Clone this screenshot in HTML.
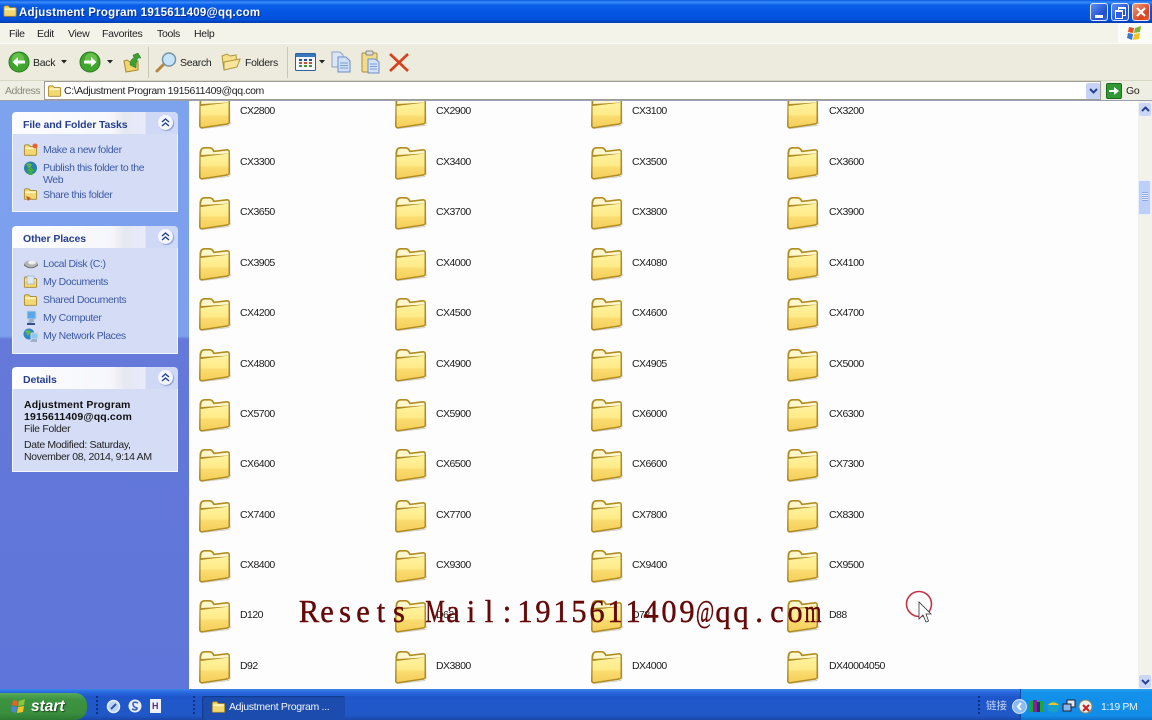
<!DOCTYPE html>
<html><head><meta charset="utf-8"><style>
html,body{margin:0;padding:0}
body{width:1152px;height:720px;overflow:hidden;position:relative;background:#fff;font-family:"Liberation Sans","Noto Sans CJK SC",sans-serif;font-size:10.5px;color:#222}
.a{position:absolute;white-space:nowrap}
.t{font-size:10.5px;letter-spacing:-.3px;line-height:13px}
.f{position:absolute;width:34px;height:34px}
.l{position:absolute;font-size:10.5px;letter-spacing:-.55px;line-height:12px;color:#1c1c1c;white-space:nowrap}
.lk{position:absolute;left:43px;color:#3d5aa6;font-size:10.5px;letter-spacing:-.42px;line-height:12px;white-space:nowrap}
.hd{position:absolute;left:12px;width:166px;height:22px;border-radius:4px 4px 0 0;background:linear-gradient(90deg,#fdfdfe 0,#f6f7fc 60%,#e6e8f0 68%,#e6e9f8 75%,#e8ebfa 80%,#cfd9f6 81%,#cfd9f6 100%)}
.ti{position:absolute;left:23px;color:#26408f;font-weight:bold;font-size:10.5px;letter-spacing:-.1px;line-height:13px;white-space:nowrap}
.bd{position:absolute;left:12px;width:164px;background:#d5ddf6;border:1px solid #f4f6fd;border-top:0}
.chev{position:absolute;left:158px;width:15px;height:15px;border-radius:50%;background:#f4f6fd;box-shadow:1px 1px 1px #8b9ad8}
</style></head><body>
<svg width="0" height="0" style="position:absolute"><defs>
<linearGradient id="g1" x1="0" y1="0" x2="0" y2="1"><stop offset="0" stop-color="#fff3a0"/><stop offset=".5" stop-color="#ffea88"/><stop offset=".56" stop-color="#fbdc70"/><stop offset="1" stop-color="#f4cf5a"/></linearGradient>
<symbol id="fo" viewBox="0 0 34 34">
<path d="M3 33.5 L32 30 L33.5 27 L33.5 8 L34 28 L32 31 L5 34 Z" fill="#cfcfc8"/>
<path d="M2.5 6 Q3 1.5 7 1 L13 1 Q15.5 1 17.5 4.5 L30 3 Q33 3 33 6 L33 27 Q33 29 30.5 29.7 L5 33.5 Q2 33.5 2 30.5 Z" fill="#b08c22"/>
<path d="M4.2 9 L4.4 6 Q4.6 3 7.5 2.6 L13 2.6 Q14.5 2.6 16.5 6.2 L30 4.6 Q31.4 4.6 31.5 6 L31.5 7.5 Z" fill="#fff8cc"/>
<path d="M3.6 11 L31.5 7.6 L31.5 27 Q31.5 28 30 28.2 L5.2 32 Q3.6 32 3.6 30.5 Z" fill="url(#g1)"/>
</symbol>
<symbol id="sf" viewBox="0 0 16 16"><path d="M1 4 Q1 2 3 2 L6 2 L8 4 L14 4 Q15 4 15 5 L15 13 Q15 14 14 14 L2 14 Q1 14 1 13 Z" fill="#f3d772" stroke="#a5872c"/><path d="M2 5 L14 5 L14 7 L2 7 Z" fill="#fff5c0"/></symbol>
</defs></svg>

<!-- title bar -->
<div class="a" style="left:0;top:0;width:1152px;height:23px;background:linear-gradient(180deg,#0a5be0 0,#3a8cfb 10%,#0a5fe8 22%,#0254e2 60%,#0350da 85%,#003db0 100%)"></div>
<svg class="a" style="left:2px;top:4px" width="16" height="14"><use href="#sf" width="16" height="14"/></svg>
<div class="a" style="left:19px;top:6px;color:#fff;font-weight:bold;font-size:11.5px;line-height:14px;letter-spacing:.25px;text-shadow:1px 1px 0 #0a2f90">Adjustment Program 1915611409@qq.com</div>
<div class="a" style="left:1090px;top:3px;width:18px;height:18px;border:1px solid #dfe8ff;box-sizing:border-box;border-radius:3px;background:linear-gradient(135deg,#5e8ff0,#1f4fd0 70%,#3a6ae0)"><div class="a" style="left:4px;top:11px;width:8px;height:3px;background:#fff"></div></div>
<div class="a" style="left:1111px;top:3px;width:18px;height:18px;border:1px solid #dfe8ff;box-sizing:border-box;border-radius:3px;background:linear-gradient(135deg,#5e8ff0,#1f4fd0 70%,#3a6ae0)"><div class="a" style="left:6px;top:3px;width:6px;height:6px;border:1px solid #fff;border-top-width:2px"></div><div class="a" style="left:3px;top:6px;width:6px;height:6px;border:1px solid #fff;border-top-width:2px;background:#2f5fdc"></div></div>
<div class="a" style="left:1132px;top:3px;width:18px;height:18px;border:1px solid #f3e2da;box-sizing:border-box;border-radius:3px;background:linear-gradient(135deg,#ee9a80,#d8441c 70%,#e2603c)"><svg class="a" style="left:2px;top:2px" width="12" height="12"><path d="M2 2 L10 10 M10 2 L2 10" stroke="#fff" stroke-width="2.2"/></svg></div>

<!-- menu bar -->
<div class="a" style="left:0;top:23px;width:1152px;height:21px;background:#f4f3ea;border-bottom:1px solid #fbfbf7;box-sizing:border-box"></div>
<div class="a t" style="left:9px;top:28px;color:#222">File</div>
<div class="a t" style="left:37px;top:28px;color:#222">Edit</div>
<div class="a t" style="left:68px;top:28px;color:#222">View</div>
<div class="a t" style="left:102px;top:28px;color:#222">Favorites</div>
<div class="a t" style="left:157px;top:28px;color:#222">Tools</div>
<div class="a t" style="left:194px;top:28px;color:#222">Help</div>
<div class="a" style="left:1118px;top:23px;width:34px;height:21px;background:#fbfbf8"></div>
<svg class="a" style="left:1126px;top:25px" width="18" height="16" viewBox="0 0 18 16"><path d="M3 2 L8 3 L7 8 L2 7 Z" fill="#e8522a"/><path d="M9 3 L15 1 L14 7 L8 8 Z" fill="#7cb52f"/><path d="M2 8 L7 9 L6 15 L1 13 Z" fill="#3a74d8"/><path d="M8 9 L14 8 L13 14 L7 15 Z" fill="#f3c322"/></svg>

<!-- toolbar -->
<div class="a" style="left:0;top:44px;width:1152px;height:37px;background:#ecebdd;border-bottom:1px solid #d8d6c4;box-sizing:border-box"></div>
<div class="a" style="left:148px;top:47px;width:1px;height:31px;background:#c8c6b4"></div>
<div class="a" style="left:287px;top:47px;width:1px;height:31px;background:#c8c6b4"></div>
<svg class="a" style="left:8px;top:51px" width="22" height="22" viewBox="0 0 22 22"><circle cx="11" cy="11" r="10" fill="#3fa52f" stroke="#2b7a22"/><circle cx="10" cy="8" r="6" fill="#7fd05a" opacity=".6"/><path d="M17 9.5 H10 V6 L4.5 11 L10 16 V12.5 H17 Z" fill="#fff"/></svg>
<div class="a t" style="left:33px;top:57px;color:#222">Back</div>
<svg class="a" style="left:61px;top:60px" width="6" height="4"><path d="M0 0 H6 L3 3.5 Z" fill="#222"/></svg>
<svg class="a" style="left:79px;top:51px" width="22" height="22" viewBox="0 0 22 22"><circle cx="11" cy="11" r="10" fill="#3fa52f" stroke="#2b7a22"/><circle cx="12" cy="8" r="6" fill="#7fd05a" opacity=".6"/><path d="M5 9.5 H12 V6 L17.5 11 L12 16 V12.5 H5 Z" fill="#fff"/></svg>
<svg class="a" style="left:107px;top:60px" width="6" height="4"><path d="M0 0 H6 L3 3.5 Z" fill="#222"/></svg>
<svg class="a" style="left:123px;top:52px" width="19" height="21" viewBox="0 0 19 21"><path d="M1 9 L4 8 L7 10 L15 9 L15 18 L3 20 Z" fill="#f2d56e" stroke="#a5872c"/><path d="M7 13 Q7 7 11 6 L10 3 L15 1 L18 6 L15 6 Q13 9 13 16 Z" fill="#3f9f34" stroke="#2b7a22" stroke-width=".5"/></svg>
<svg class="a" style="left:155px;top:51px" width="23" height="23" viewBox="0 0 23 23"><path d="M9 13 L2 20" stroke="#b8863c" stroke-width="3" stroke-linecap="round"/><circle cx="14" cy="8.5" r="6.5" fill="#c4e4fa" stroke="#7a8fa8" stroke-width="1.5"/></svg>
<div class="a t" style="left:180px;top:57px;color:#222">Search</div>
<svg class="a" style="left:221px;top:52px" width="20" height="20" viewBox="0 0 20 20"><path d="M1 4 L6 2 L9 4 L15 3 L16 14 L3 18 Z" fill="#f6e08c" stroke="#b0943a"/><path d="M3 10 L19 7 L16 15 L3 18 Z" fill="#f9e69c" stroke="#b0943a"/></svg>
<div class="a t" style="left:245px;top:57px;color:#222">Folders</div>
<svg class="a" style="left:295px;top:53px" width="30" height="18" viewBox="0 0 30 18"><rect x=".5" y=".5" width="20" height="17" rx="1" fill="#f4f7fc" stroke="#2d5f9e"/><rect x="1" y="1" width="19" height="3" fill="#3a77c0"/><path d="M4 6h3v2H4zM9 6h3v2H9zM14 6h3v2h-3z" fill="#2a4c8f"/><path d="M4 9h3v2H4zM9 9h3v2H9zM14 9h3v2h-3z" fill="#c8502e"/><path d="M4 12h3v2H4zM9 12h3v2H9zM14 12h3v2h-3z" fill="#4a8f3e"/><path d="M24 7 H30 L27 10.5 Z" fill="#222"/></svg>
<svg class="a" style="left:331px;top:51px" width="21" height="22" viewBox="0 0 21 22"><path d="M1 1 H9 L12 4 V16 H1 Z" fill="#dbe6f6" stroke="#8ca3c6"/><path d="M7 6 H15 L19 10 V21 H7 Z" fill="#cfdff8" stroke="#6f8fbf"/><path d="M9 12h8M9 14.5h8M9 17h8" stroke="#7da0d0"/></svg>
<svg class="a" style="left:361px;top:50px" width="19" height="24" viewBox="0 0 19 24"><rect x="1" y="3" width="15" height="19" rx="1" fill="#f0dc8c" stroke="#a8923c"/><rect x="5" y="1" width="7" height="4" rx="1" fill="#ddd" stroke="#888"/><path d="M7 9 H14 L18 12 V23 H7 Z" fill="#d3e1f8" stroke="#6f8fbf"/><path d="M9 14h7M9 16.5h7M9 19h7" stroke="#7da0d0"/></svg>
<svg class="a" style="left:389px;top:53px" width="20" height="19" viewBox="0 0 20 19"><path d="M1 1 L19 18 M19 1 L1 18" stroke="#d8401c" stroke-width="2.6"/></svg>

<!-- address bar -->
<div class="a" style="left:0;top:81px;width:1152px;height:20px;background:#efeee2"></div>
<div class="a t" style="left:5px;top:85px;color:#8a8a80;letter-spacing:-.5px">Address</div>
<div class="a" style="left:44px;top:81px;width:1057px;height:19px;background:#fff;border:1px solid #9d9d95;box-sizing:border-box"></div>
<svg class="a" style="left:47px;top:84px" width="15" height="14"><use href="#sf" width="15" height="14"/></svg>
<div class="a t" style="left:64px;top:85px;color:#222;letter-spacing:-.38px">C:\Adjustment Program 1915611409@qq.com</div>
<div class="a" style="left:1086px;top:83px;width:14px;height:16px;background:#c6d3f7;border-radius:2px"><svg class="a" style="left:3px;top:5px" width="9" height="6"><path d="M1 1 L4.5 4.5 L8 1" fill="none" stroke="#26408f" stroke-width="2"/></svg></div>
<div class="a" style="left:1106px;top:83px;width:16px;height:16px;background:#2f9a34;border:1px solid #1c6a20;box-sizing:border-box;border-radius:2px"><svg class="a" style="left:1px;top:1px" width="12" height="12"><path d="M1 5 H6 V2 L11 6 L6 10 V7 H1 Z" fill="#fff"/></svg></div>
<div class="a t" style="left:1126px;top:85px;color:#222">Go</div>
<div class="a" style="left:0;top:100px;width:1152px;height:1px;background:#9aa0b0"></div>

<!-- sidebar -->
<div class="a" style="left:0;top:101px;width:189px;height:588px;background:linear-gradient(180deg,#7da2ee 0,#7c9fee 40%,#6479d9 40.5%,#5f75d9 100%)"></div>

<div class="hd" style="top:112px"></div>
<div class="ti" style="top:119px">File and Folder Tasks</div>
<div class="chev" style="top:115px"></div>
<div class="bd" style="top:134px;height:77px"></div>
<svg class="a" style="left:23px;top:143px" width="15" height="14"><use href="#sf" width="15" height="14"/><circle cx="12" cy="3" r="2.5" fill="#e8622a"/></svg>
<div class="lk" style="top:144px">Make a new folder</div>
<svg class="a" style="left:23px;top:161px" width="15" height="15" viewBox="0 0 15 15"><circle cx="7.5" cy="7" r="6.5" fill="#2a7fb0"/><path d="M3 3 Q7 1 9 4 L6 8 Z" fill="#5fb64a"/><path d="M7.5 6 L12 10 H9.5 V14 H5.5 V10 H3 Z" fill="#3fae3a"/></svg>
<div class="lk" style="top:162px">Publish this folder to the</div>
<div class="lk" style="top:174px">Web</div>
<svg class="a" style="left:23px;top:187px" width="15" height="14"><use href="#sf" width="15" height="14"/><path d="M3 9 L8 11 L5 14" fill="#c25a20"/></svg>
<div class="lk" style="top:189px">Share this folder</div>

<div class="hd" style="top:226px"></div>
<div class="ti" style="top:233px">Other Places</div>
<div class="chev" style="top:229px"></div>
<div class="bd" style="top:248px;height:105px"></div>
<svg class="a" style="left:23px;top:258px" width="16" height="12" viewBox="0 0 16 12"><ellipse cx="8" cy="6" rx="7" ry="3.5" fill="#b4b4b4"/><ellipse cx="9" cy="4.5" rx="4" ry="2" fill="#eee"/><path d="M1 6 Q8 13 15 6 L15 7.5 Q8 13 1 7.5 Z" fill="#666"/></svg>
<div class="lk" style="top:258px">Local Disk (C:)</div>
<svg class="a" style="left:23px;top:275px" width="15" height="14"><use href="#sf" width="15" height="14"/><rect x="4" y="1" width="7" height="8" fill="#dfe8f5" stroke="#8ca3c6" stroke-width=".6"/></svg>
<div class="lk" style="top:276px">My Documents</div>
<svg class="a" style="left:23px;top:293px" width="15" height="14"><use href="#sf" width="15" height="14"/></svg>
<div class="lk" style="top:294px">Shared Documents</div>
<svg class="a" style="left:25px;top:310px" width="12" height="16" viewBox="0 0 12 16"><rect x="2" y="1" width="9" height="8" rx="1" fill="#58a8ea" stroke="#c8d0dc"/><path d="M4 9 L9 9 L9 12 L3 14 Z" fill="#9fb0cc"/><path d="M2 13 H10 V15 H2 Z" fill="#36508e"/></svg>
<div class="lk" style="top:312px">My Computer</div>
<svg class="a" style="left:23px;top:328px" width="16" height="16" viewBox="0 0 16 16"><circle cx="6" cy="6" r="5.5" fill="#2f86c8"/><path d="M2 3 Q6 1 8 4 L5 8 Z" fill="#68b84c"/><rect x="8" y="5" width="7" height="6" rx="1" fill="#8fc8f0" stroke="#d0d8e4"/><path d="M9 11 H14 V14 H7 Z" fill="#9fb0cc"/></svg>
<div class="lk" style="top:330px">My Network Places</div>

<div class="hd" style="top:367px"></div>
<div class="ti" style="top:374px">Details</div>
<div class="chev" style="top:370px"></div>
<div class="bd" style="top:389px;height:82px"></div>
<div class="a" style="left:24px;top:400px;font-weight:bold;font-size:10.5px;line-height:11.5px;letter-spacing:.15px;color:#111">Adjustment Program<br>1915611409@qq.com</div>
<div class="a" style="left:24px;top:423px;font-size:10.5px;letter-spacing:-.3px;line-height:12px;color:#222">File Folder</div>
<div class="a" style="left:24px;top:440px;font-size:10.5px;letter-spacing:-.34px;line-height:11.5px;color:#222">Date Modified: Saturday,<br>November 08, 2014, 9:14 AM</div>
<svg class="a" style="left:160px;top:117px" width="11" height="11"><path d="M2 5 L5.5 2 L9 5 M2 9 L5.5 6 L9 9" fill="none" stroke="#26408f" stroke-width="1.4"/></svg>
<svg class="a" style="left:160px;top:231px" width="11" height="11"><path d="M2 5 L5.5 2 L9 5 M2 9 L5.5 6 L9 9" fill="none" stroke="#26408f" stroke-width="1.4"/></svg>
<svg class="a" style="left:160px;top:372px" width="11" height="11"><path d="M2 5 L5.5 2 L9 5 M2 9 L5.5 6 L9 9" fill="none" stroke="#26408f" stroke-width="1.4"/></svg>

<!-- content -->
<div class="a" style="left:189px;top:101px;width:949px;height:588px;background:#fdfdfd;overflow:hidden">
<svg class="f" style="left:8px;top:-6px"><use href="#fo"/></svg><div class="l" style="left:51px;top:4px">CX2800</div>
<svg class="f" style="left:204px;top:-6px"><use href="#fo"/></svg><div class="l" style="left:247px;top:4px">CX2900</div>
<svg class="f" style="left:400px;top:-6px"><use href="#fo"/></svg><div class="l" style="left:443px;top:4px">CX3100</div>
<svg class="f" style="left:596px;top:-6px"><use href="#fo"/></svg><div class="l" style="left:640px;top:4px">CX3200</div>

<svg class="f" style="left:8px;top:45px"><use href="#fo"/></svg><div class="l" style="left:51px;top:55px">CX3300</div>
<svg class="f" style="left:204px;top:45px"><use href="#fo"/></svg><div class="l" style="left:247px;top:55px">CX3400</div>
<svg class="f" style="left:400px;top:45px"><use href="#fo"/></svg><div class="l" style="left:443px;top:55px">CX3500</div>
<svg class="f" style="left:596px;top:45px"><use href="#fo"/></svg><div class="l" style="left:640px;top:55px">CX3600</div>

<svg class="f" style="left:8px;top:95px"><use href="#fo"/></svg><div class="l" style="left:51px;top:105px">CX3650</div>
<svg class="f" style="left:204px;top:95px"><use href="#fo"/></svg><div class="l" style="left:247px;top:105px">CX3700</div>
<svg class="f" style="left:400px;top:95px"><use href="#fo"/></svg><div class="l" style="left:443px;top:105px">CX3800</div>
<svg class="f" style="left:596px;top:95px"><use href="#fo"/></svg><div class="l" style="left:640px;top:105px">CX3900</div>

<svg class="f" style="left:8px;top:146px"><use href="#fo"/></svg><div class="l" style="left:51px;top:156px">CX3905</div>
<svg class="f" style="left:204px;top:146px"><use href="#fo"/></svg><div class="l" style="left:247px;top:156px">CX4000</div>
<svg class="f" style="left:400px;top:146px"><use href="#fo"/></svg><div class="l" style="left:443px;top:156px">CX4080</div>
<svg class="f" style="left:596px;top:146px"><use href="#fo"/></svg><div class="l" style="left:640px;top:156px">CX4100</div>

<svg class="f" style="left:8px;top:196px"><use href="#fo"/></svg><div class="l" style="left:51px;top:206px">CX4200</div>
<svg class="f" style="left:204px;top:196px"><use href="#fo"/></svg><div class="l" style="left:247px;top:206px">CX4500</div>
<svg class="f" style="left:400px;top:196px"><use href="#fo"/></svg><div class="l" style="left:443px;top:206px">CX4600</div>
<svg class="f" style="left:596px;top:196px"><use href="#fo"/></svg><div class="l" style="left:640px;top:206px">CX4700</div>

<svg class="f" style="left:8px;top:247px"><use href="#fo"/></svg><div class="l" style="left:51px;top:257px">CX4800</div>
<svg class="f" style="left:204px;top:247px"><use href="#fo"/></svg><div class="l" style="left:247px;top:257px">CX4900</div>
<svg class="f" style="left:400px;top:247px"><use href="#fo"/></svg><div class="l" style="left:443px;top:257px">CX4905</div>
<svg class="f" style="left:596px;top:247px"><use href="#fo"/></svg><div class="l" style="left:640px;top:257px">CX5000</div>

<svg class="f" style="left:8px;top:297px"><use href="#fo"/></svg><div class="l" style="left:51px;top:307px">CX5700</div>
<svg class="f" style="left:204px;top:297px"><use href="#fo"/></svg><div class="l" style="left:247px;top:307px">CX5900</div>
<svg class="f" style="left:400px;top:297px"><use href="#fo"/></svg><div class="l" style="left:443px;top:307px">CX6000</div>
<svg class="f" style="left:596px;top:297px"><use href="#fo"/></svg><div class="l" style="left:640px;top:307px">CX6300</div>

<svg class="f" style="left:8px;top:347px"><use href="#fo"/></svg><div class="l" style="left:51px;top:357px">CX6400</div>
<svg class="f" style="left:204px;top:347px"><use href="#fo"/></svg><div class="l" style="left:247px;top:357px">CX6500</div>
<svg class="f" style="left:400px;top:347px"><use href="#fo"/></svg><div class="l" style="left:443px;top:357px">CX6600</div>
<svg class="f" style="left:596px;top:347px"><use href="#fo"/></svg><div class="l" style="left:640px;top:357px">CX7300</div>

<svg class="f" style="left:8px;top:398px"><use href="#fo"/></svg><div class="l" style="left:51px;top:408px">CX7400</div>
<svg class="f" style="left:204px;top:398px"><use href="#fo"/></svg><div class="l" style="left:247px;top:408px">CX7700</div>
<svg class="f" style="left:400px;top:398px"><use href="#fo"/></svg><div class="l" style="left:443px;top:408px">CX7800</div>
<svg class="f" style="left:596px;top:398px"><use href="#fo"/></svg><div class="l" style="left:640px;top:408px">CX8300</div>

<svg class="f" style="left:8px;top:448px"><use href="#fo"/></svg><div class="l" style="left:51px;top:458px">CX8400</div>
<svg class="f" style="left:204px;top:448px"><use href="#fo"/></svg><div class="l" style="left:247px;top:458px">CX9300</div>
<svg class="f" style="left:400px;top:448px"><use href="#fo"/></svg><div class="l" style="left:443px;top:458px">CX9400</div>
<svg class="f" style="left:596px;top:448px"><use href="#fo"/></svg><div class="l" style="left:640px;top:458px">CX9500</div>

<svg class="f" style="left:8px;top:498px"><use href="#fo"/></svg><div class="l" style="left:51px;top:508px">D120</div>
<svg class="f" style="left:204px;top:498px"><use href="#fo"/></svg><div class="l" style="left:247px;top:508px">D62</div>
<svg class="f" style="left:400px;top:498px"><use href="#fo"/></svg><div class="l" style="left:443px;top:508px">D78</div>
<svg class="f" style="left:596px;top:498px"><use href="#fo"/></svg><div class="l" style="left:640px;top:508px">D88</div>

<svg class="f" style="left:8px;top:549px"><use href="#fo"/></svg><div class="l" style="left:51px;top:559px">D92</div>
<svg class="f" style="left:204px;top:549px"><use href="#fo"/></svg><div class="l" style="left:247px;top:559px">DX3800</div>
<svg class="f" style="left:400px;top:549px"><use href="#fo"/></svg><div class="l" style="left:443px;top:559px">DX4000</div>
<svg class="f" style="left:596px;top:549px"><use href="#fo"/></svg><div class="l" style="left:640px;top:559px">DX40004050</div>
</div>

<!-- scrollbar -->
<div class="a" style="left:1138px;top:101px;width:14px;height:588px;background:#f3f2ea"></div>
<div class="a" style="left:1139px;top:103px;width:12px;height:13px;background:#c9d6f8;border-radius:2px"><svg class="a" style="left:2px;top:3px" width="9" height="6"><path d="M1 5 L4.5 1.5 L8 5" fill="none" stroke="#26408f" stroke-width="2"/></svg></div>
<div class="a" style="left:1138px;top:180px;width:13px;height:35px;background:#bcd0fa;border:1px solid #e8eefc;box-sizing:border-box;border-radius:2px"></div>
<div class="a" style="left:1142px;top:192px;width:6px;height:9px;background:repeating-linear-gradient(180deg,#8ea8e8 0,#8ea8e8 1px,#e2eafd 1px,#e2eafd 2px)"></div>
<div class="a" style="left:1139px;top:675px;width:12px;height:13px;background:#c9d6f8;border-radius:2px"><svg class="a" style="left:2px;top:4px" width="9" height="6"><path d="M1 1 L4.5 4.5 L8 1" fill="none" stroke="#26408f" stroke-width="2"/></svg></div>

<!-- taskbar -->
<div class="a" style="left:0;top:689px;width:1152px;height:31px;background:linear-gradient(180deg,#3a86e8 0,#2a6ae0 10%,#1f57cb 25%,#2158c8 85%,#1a47a8 100%)"></div>
<div class="a" style="left:0;top:693px;width:87px;height:27px;border-radius:0 12px 12px 0;background:linear-gradient(180deg,#58a85a 0,#3c9342 25%,#3a8e3e 75%,#2a7a30 100%)"></div>
<svg class="a" style="left:10px;top:697px" width="18" height="18" viewBox="0 0 18 18"><path d="M3 3 L8 4 L7 9 L2 8 Z" fill="#e8622a"/><path d="M9 4 L15 2 L14 8 L8 9 Z" fill="#8cc63a"/><path d="M2 9 L7 10 L6 16 L1 14 Z" fill="#4a84e0"/><path d="M8 10 L14 9 L13 15 L7 16 Z" fill="#f3c322"/></svg>
<div class="a" style="left:31px;top:698px;color:#fff;font-weight:bold;font-style:italic;font-size:15.5px;line-height:18px;text-shadow:1px 1px 1px #1a4a1a">start</div>
<div class="a" style="left:96px;top:696px;width:2px;height:20px;background:repeating-linear-gradient(180deg,#0f2f80 0,#0f2f80 2px,transparent 2px,transparent 4px)"></div>
<div class="a" style="left:193px;top:696px;width:2px;height:20px;background:repeating-linear-gradient(180deg,#0f2f80 0,#0f2f80 2px,transparent 2px,transparent 4px)"></div>
<svg class="a" style="left:106px;top:699px" width="15" height="15" viewBox="0 0 15 15"><circle cx="7.5" cy="7.5" r="6" fill="#bcd4f4" stroke="#e8f0fc" stroke-width="1.5"/><path d="M5 10 L10 5" stroke="#2a58b0" stroke-width="2"/></svg>
<svg class="a" style="left:128px;top:699px" width="14" height="14" viewBox="0 0 14 14"><circle cx="7" cy="7" r="6.5" fill="#e8eef8"/><path d="M10 4 Q5 2 5 5 T9 9 Q9 12 4 10" fill="none" stroke="#3a60b8" stroke-width="1.6"/></svg>
<div class="a" style="left:150px;top:699px;width:11px;height:14px;background:#eef1f8"></div>
<div class="a" style="left:152px;top:701px;font-size:9px;line-height:10px;font-weight:bold;color:#5a2a8a">H</div>
<div class="a" style="left:202px;top:696px;width:143px;height:24px;background:#1c4cae;border-radius:2px;box-shadow:inset 1px 1px 1px #123a8c"></div>
<svg class="a" style="left:211px;top:700px" width="15" height="14"><use href="#sf" width="15" height="14"/></svg>
<div class="a" style="left:229px;top:701px;color:#f2f5fc;font-size:10.5px;line-height:13px;letter-spacing:-.32px">Adjustment Program ...</div>
<div class="a" style="left:978px;top:696px;width:2px;height:20px;background:repeating-linear-gradient(180deg,#0f2f80 0,#0f2f80 2px,transparent 2px,transparent 4px)"></div>
<div class="a" style="left:986px;top:700px;color:#c8d8f4;font-size:10.5px;line-height:13px">链接</div>
<div class="a" style="left:1020px;top:689px;width:132px;height:31px;background:linear-gradient(180deg,#2a9ff0 0,#1290ea 12%,#128ee8 85%,#0e70c8 100%);border-left:1px solid #0c4aa8;box-sizing:border-box"></div>
<div class="a" style="left:1012px;top:699px;width:15px;height:15px;border-radius:50%;background:#8cbcf4;border:1px solid #d6e6fc;box-sizing:border-box"><svg class="a" style="left:3px;top:2px" width="7" height="9"><path d="M5 1 L2 4.5 L5 8" fill="none" stroke="#fff" stroke-width="2"/></svg></div>
<svg class="a" style="left:1029px;top:699px" width="15" height="15" viewBox="0 0 15 15"><rect x="1" y="2" width="13" height="11" fill="#1aa83a"/><rect x="4" y="1" width="4" height="12" fill="#8a1ea0"/><rect x="8" y="3" width="3" height="10" fill="#2a2a7a"/></svg>
<svg class="a" style="left:1047px;top:700px" width="13" height="13" viewBox="0 0 13 13"><circle cx="6.5" cy="6.5" r="6" fill="#1aa0c8"/><path d="M1 5 Q6 0 12 5 Z" fill="#f3c322"/></svg>
<svg class="a" style="left:1062px;top:699px" width="14" height="14" viewBox="0 0 14 14"><rect x="5" y="1" width="8" height="7" fill="#dfe8f4" stroke="#223"/><rect x="1" y="5" width="8" height="7" fill="#8cb4e8" stroke="#223"/></svg>
<svg class="a" style="left:1078px;top:699px" width="15" height="15" viewBox="0 0 15 15"><circle cx="7.5" cy="7.5" r="6.5" fill="#f0f0e8" stroke="#886"/><path d="M5 6 L11 12 M11 6 L5 12" stroke="#c81e1e" stroke-width="2"/></svg>
<div class="a" style="left:1101px;top:701px;color:#eaf4fe;font-size:10.5px;line-height:13px;letter-spacing:-.4px">1:19 PM</div>

<!-- watermark -->
<svg class="a" style="left:0;top:0;pointer-events:none" width="1152" height="720">
<circle cx="919" cy="604" r="12.5" fill="none" stroke="#c83248" stroke-width="1.6"/>
<path d="M919 602 V619 L923 615 L926 622 L928.5 621 L926 614 L931 614 Z" fill="#fff" stroke="#333" stroke-width=".8"/>
<g font-family="'Liberation Serif',serif" font-size="32" fill="#650808" stroke="#650808" stroke-width=".45" text-anchor="middle">
<text transform="translate(309,622) scale(.95,1)" x="0 18.9 37.9 56.8 75.8 94.7">Resets</text>
<text transform="translate(435,622) scale(.68,1)" x="0">M</text>
<text transform="translate(309,622) scale(.95,1)" x="151.6 170.5 189.5 208.4 227.4 246.3 265.3 284.2 303.2 322.1 341.1 360 378.9 397.9">ail:1915611409</text>
<text transform="translate(705,622) scale(.62,1)" x="0">@</text>
<text transform="translate(309,622) scale(.95,1)" x="435.8 454.7 473.7 492.6 511.6">qq.co</text>
<text transform="translate(813,622) scale(.68,1)" x="0">m</text>
</g>
</svg>
</body></html>
